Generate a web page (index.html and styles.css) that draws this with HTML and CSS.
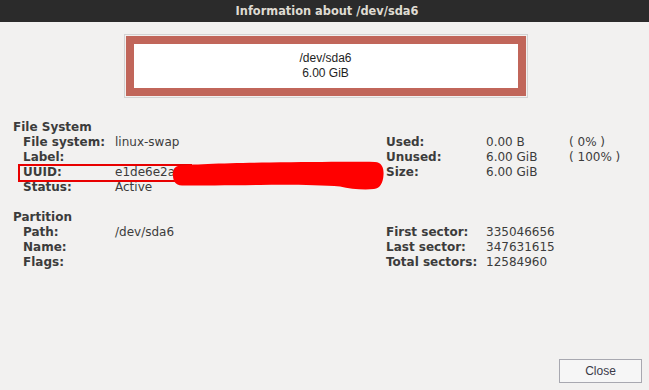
FILE: index.html
```html
<!DOCTYPE html>
<html>
<head>
<meta charset="utf-8">
<title>Information about /dev/sda6</title>
<link rel="stylesheet" href="styles.css">
</head>
<body>
<div class="window">
  <div class="titlebar">Information about /dev/sda6</div>
  <div class="content">
    <div class="partbox">
      <div class="partframe">
        <div class="partinner">
          <div>/dev/sda6</div>
          <div>6.00 GiB</div>
        </div>
      </div>
    </div>

    <div class="section fs">
      <div class="sechead">File System</div>
      <div class="grid">
        <div class="lbl">File system:</div><div class="val">linux-swap</div>
        <div class="lbl">Used:</div><div class="val">0.00 B</div><div class="val">( 0% )</div>

        <div class="lbl">Label:</div><div class="val"></div>
        <div class="lbl">Unused:</div><div class="val">6.00 GiB</div><div class="val">( 100% )</div>

        <div class="lbl uuid">UUID:<span class="uuid-mark"></span></div>
        <div class="val uuidval">e1de6e2a<svg class="scribble" width="216" height="35" viewBox="0 0 216 35"><path d="M 8,8 C 20,6 60,5 100,4.5 C 140,4 180,3.5 205,4 C 212,4.5 214,10 213.5,17 C 213,25 210,30.5 204,31 C 194,32 180,31 170,28.5 C 150,27 120,26.5 90,27 C 60,27.5 30,27.5 12,27.5 C 5,27.5 3,22 3,17.5 C 3,12 4,9 8,8 Z" fill="#ff0000"/></svg></div>
        <div class="lbl">Size:</div><div class="val">6.00 GiB</div><div class="val"></div>

        <div class="lbl">Status:</div><div class="val">Active</div>
        <div class="lbl"></div><div class="val"></div><div class="val"></div>
      </div>
    </div>

    <div class="section part">
      <div class="sechead">Partition</div>
      <div class="grid">
        <div class="lbl">Path:</div><div class="val">/dev/sda6</div>
        <div class="lbl">First sector:</div><div class="val">335046656</div><div class="val"></div>

        <div class="lbl">Name:</div><div class="val"></div>
        <div class="lbl">Last sector:</div><div class="val">347631615</div><div class="val"></div>

        <div class="lbl">Flags:</div><div class="val"></div>
        <div class="lbl">Total sectors:</div><div class="val">12584960</div><div class="val"></div>
      </div>
    </div>
  </div>
  <div class="footer">
    <button class="btn">Close</button>
  </div>
</div>
</body>
</html>
```

FILE: styles.css
```css
html, body {
  margin: 0;
  padding: 0;
}
body {
  background: #f2f1f0;
  width: 649px;
  height: 390px;
  overflow: hidden;
  font-family: "DejaVu Sans", sans-serif;
  color: #3c3c3c;
}
.window {
  display: flex;
  flex-direction: column;
  height: 390px;
}
.titlebar {
  height: 22px;
  line-height: 23px;
  background: #2b2b2b;
  color: #dfdbd2;
  font-weight: bold;
  font-size: 11.4px;
  text-align: center;
  padding-left: 5px;
}
.content {
  flex: 1;
}
.partbox {
  width: 400px;
  margin: 12px auto 0;
  border: 1px solid #d3d3d3;
  padding: 1px;
  position: relative;
  left: 1px;
}
.partframe {
  border: 8px solid #c1665a;
}
.partinner {
  background: #ffffff;
  height: 44px;
  display: flex;
  flex-direction: column;
  justify-content: center;
  align-items: center;
  font-family: "Liberation Sans", Arial, sans-serif;
  font-size: 12px;
  line-height: 15px;
  color: #1e1e1e;
}
.section {
  padding-left: 13px;
  font-size: 12px;
  line-height: 15px;
}
.fs {
  margin-top: 22px;
}
.part {
  margin-top: 15px;
}
.sechead {
  font-weight: bold;
}
.grid {
  display: grid;
  grid-template-columns: 92px 271px 100px 83px auto;
  grid-auto-rows: 15px;
  padding-left: 10px;
}
.lbl {
  font-weight: bold;
  white-space: nowrap;
}
.val {
  white-space: nowrap;
}
.uuid {
  position: relative;
}
.uuid-mark {
  position: absolute;
  left: -5px;
  top: -1.5px;
  width: 170px;
  height: 14px;
  border: 2px solid #e80000;
}
.uuidval {
  position: relative;
}
.scribble {
  position: absolute;
  left: 55px;
  top: -7.5px;
}
.footer {
  display: flex;
  justify-content: flex-end;
  padding: 0 7px 7px 0;
}
.btn {
  width: 83px;
  height: 24px;
  border: 1px solid #a8a8b0;
  background: #f6f6f6;
  font-family: "Liberation Sans", Arial, sans-serif;
  font-size: 12px;
  color: #3a3a48;
  padding: 0;
  border-radius: 0;
}
```
